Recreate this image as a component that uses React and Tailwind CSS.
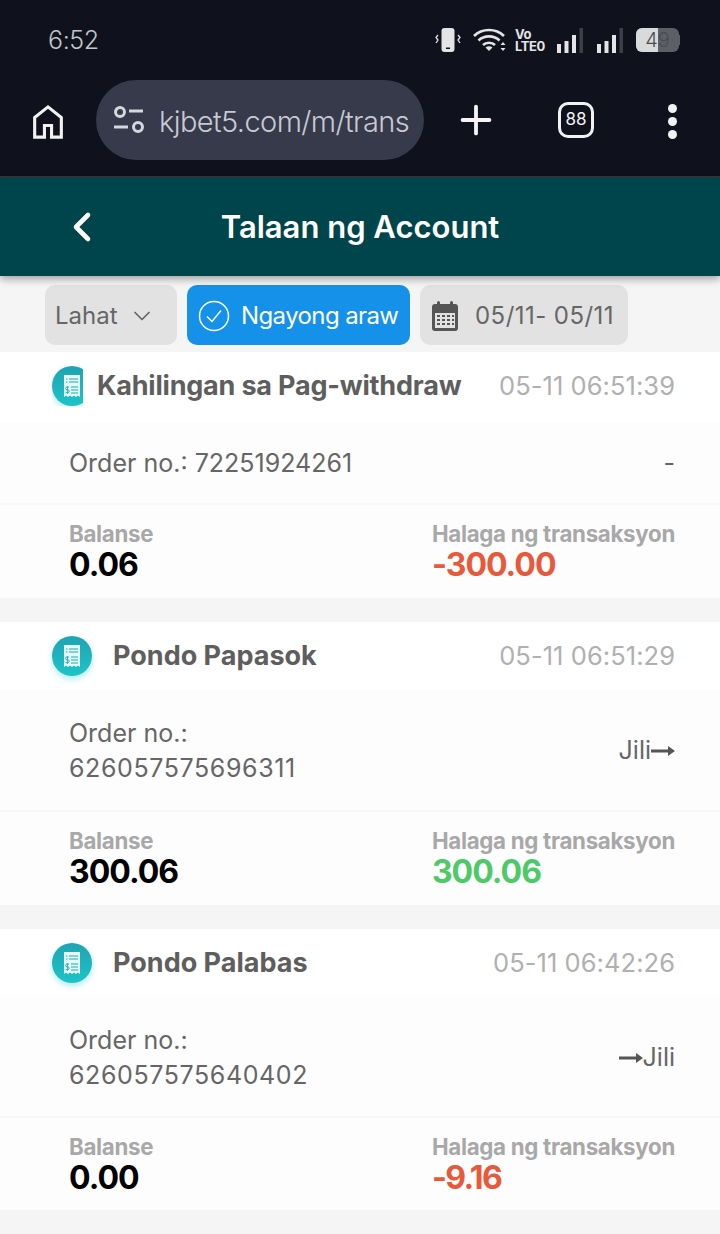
import { ChevronLeft, ChevronDown, Plus } from "lucide-react";

const font = { fontFamily: "Inter, sans-serif" };

const ReceiptIcon = () => (
  <div className="w-10 h-10 shrink-0 rounded-full bg-gradient-to-b from-[#1fa3b2] to-[#1cc4c8] shadow-[0_3px_6px_rgba(30,200,210,0.35)] flex items-center justify-center">
    <svg width="16" height="24" viewBox="0 0 16 24">
      <path d="M0 1h16v22l-2-1.500-2 1.500-2-1.500-2 1.500-2-1.500-2 1.500-2-1.500-2 1.500z" fill="#e6fafa" />
      <path d="M5 5h9M5 8h9M7 13h7M7 16h7M7 19h7" stroke="#1fa8b4" strokeWidth="1.200" />
      <path d="M2 5h1.500M2 8h1.500" stroke="#1fa8b4" strokeWidth="1.200" />
      <path d="M5 13H3a1.200 1.200 0 0 0 0 2.800h.8a1.200 1.200 0 0 1 0 2.800H1.600M3.400 12v8" stroke="#1fa8b4" strokeWidth="0.900" fill="none" />
    </svg>
  </div>
);

const Digits = ({ children }) => <span className="tracking-[0.6px]">{children}</span>;

const Record = ({ title, time, order, orderClass, bottomClass, note, balance, amount, amountClass, clipIcon }) => (
  <div className="bg-[#fdfdfd] mb-6">
    <div className={clipIcon ? "flex items-start justify-between bg-white pl-[52px] pr-[45px] pt-[14px] h-[70px]" : "flex items-center justify-between bg-white pl-[52px] pr-[45px] pt-[14px] pb-[14px] h-[68px]"}>
      <div className="flex items-center">
        {clipIcon ? (
          <div className="w-[31px] mr-[14px] overflow-hidden">
            <ReceiptIcon />
          </div>
        ) : (
          <div className="mr-[21px]">
            <ReceiptIcon />
          </div>
        )}
        <span className={clipIcon ? "text-[27px] font-bold text-[#5e5e5e] tracking-[-0.2px] leading-[40px]" : "text-[27px] font-bold text-[#5e5e5e]"}>{title}</span>
      </div>
      <span className={clipIcon ? "text-[25.5px] text-[#b0b0b0] tracking-[0.05px] leading-[40px]" : "text-[25.5px] text-[#b0b0b0] tracking-[0.05px]"}>{time}</span>
    </div>
    <div className={orderClass}>
      <div className="leading-[35px]">{order}</div>
      <div>{note}</div>
    </div>
    <div className={bottomClass}>
      <div>
        <div className="text-[22.3px] font-bold text-[#a8a8a8] leading-[28px] tracking-[-0.3px]">Balanse</div>
        <div className="text-[32px] font-bold text-black leading-[33px] tracking-[-1px]">{balance}</div>
      </div>
      <div>
        <div className="text-[22.3px] font-bold text-[#a8a8a8] leading-[28px] tracking-[-0.3px]">Halaga ng transaksyon</div>
        <div className={amountClass}>{amount}</div>
      </div>
    </div>
  </div>
);

const Arrow = () => (
  <svg width="24" height="12" viewBox="0 0 24 12" className="inline-block">
    <path d="M0 4.500h17V1l7 5-7 5V7.500H0z" fill="#555555" />
  </svg>
);

const Signal = ({ className }) => (
  <svg width="26" height="25" viewBox="0 0 26 25" className={className}>
    <rect x="0" y="16" width="4" height="9" fill="#e4e4e6" />
    <rect x="7.500" y="13" width="4" height="12" fill="#e4e4e6" />
    <rect x="15" y="7" width="4" height="18" fill="#e4e4e6" />
    <rect x="22.500" y="0" width="3.500" height="25" fill="#3d3f47" />
  </svg>
);

export default function App() {
  return (
    <div className="w-[720px] h-[1234px] overflow-hidden bg-[#f5f5f5]" style={font}>
      {/* phone status bar */}
      <div className="bg-[#0f121c] h-[80px] flex items-center justify-between pl-[48px] pr-[40px]">
        <span className="text-[25px] font-light text-[#c4c6cb] tracking-[-0.4px] pt-[2px]">6:52</span>
        <div className="flex items-center">
          <svg width="26" height="26" viewBox="0 0 26 26" className="mr-[12px]">
            <rect x="6.500" y="1" width="13" height="24" rx="3" fill="#e4e4e6" />
            <rect x="11" y="20.500" width="4" height="1.500" fill="#0f121c" />
            <path d="M3 8l-2 2.500 2 2.500-2 3M23 8l2 2.500-2 2.500 2 3" stroke="#e4e4e6" strokeWidth="1.300" fill="none" />
          </svg>
          <svg width="34" height="26" viewBox="0 0 34 26" className="mr-[8px]">
            <path d="M1 9c8-8 22-8 30 0M5.500 13.500c5.500-5.500 15.500-5.500 21 0M10 18c3-3 9-3 12 0" stroke="#e4e4e6" strokeWidth="2.600" fill="none" />
            <path d="M12.500 20.500c2-1.800 5-1.800 7 0l-3.500 3.500z" fill="#e4e4e6" />
            <path d="M30 15l2.500 3h-5zM30 24l2.500-3h-5z" fill="#e4e4e6" />
          </svg>
          <div className="w-[31px] mr-[11px] text-[#e4e4e6] font-bold text-[13px] leading-[12px] tracking-[-0.4px]">
            <div>Vo</div>
            <div>LTE0</div>
          </div>
          <Signal className="mr-[14px]" />
          <Signal className="mr-[13px]" />
          <div className="relative w-[43px] h-[24px] rounded-[6px] bg-[#5c5f68] overflow-hidden flex items-center justify-center">
            <div className="absolute left-0 top-0 bottom-0 w-[22px] bg-[#d9dadc]" />
            <span className="relative text-[20px] font-light text-[#4a4c52]">49</span>
          </div>
          <div className="w-[1px] h-[10px] bg-[#5c5f68]" />
        </div>
      </div>

      {/* browser bar */}
      <div className="bg-[#0f121c] h-[98px] flex items-start pl-[32px] border-b-2 border-[#2b3a40]">
        <svg width="32" height="36" viewBox="0 0 36 40" className="mt-[24px] mr-[32px]" fill="none" stroke="#f2f2f2" strokeWidth="3.500">
          <path d="M3 37V15L18 3l15 12v22H22V24h-8v13z" />
        </svg>
        <div className="w-[328px] h-[80px] rounded-[40px] bg-[#363a4a] flex items-center pl-[17px] mr-[29px] overflow-hidden">
          <svg width="32" height="32" viewBox="0 0 32 32" className="shrink-0 mr-[14px]" fill="none" stroke="#d5d7dd" strokeWidth="3">
            <circle cx="7" cy="8" r="4.500" />
            <path d="M16 7h14M1 23h14" />
            <circle cx="25" cy="23" r="4.500" />
          </svg>
          <span className="text-[29px] font-light text-[#c8cad2] tracking-[-0.6px] whitespace-nowrap pt-[4px]">kjbet5.com/m/trans</span>
        </div>
        <Plus className="mt-[17px] mr-[59px] text-[#f4f4f4]" size={46} strokeWidth={2} />
        <div className="mt-[22px] mr-[74px] w-[36px] h-[36px] rounded-[10px] border-[3px] border-[#f2f2f2] flex items-center justify-center text-[17px] text-[#f2f2f2]">88</div>
        <div className="mt-[24px] flex flex-col gap-[4px]">
          <div className="w-[9px] h-[9px] rounded-full bg-[#f2f2f2]" />
          <div className="w-[9px] h-[9px] rounded-full bg-[#f2f2f2]" />
          <div className="w-[9px] h-[9px] rounded-full bg-[#f2f2f2]" />
        </div>
      </div>

      {/* page header */}
      <div className="relative h-[98px] bg-[#00454b] flex items-center justify-center shadow-[0_3px_8px_rgba(0,0,0,0.35)]">
        <ChevronLeft className="absolute left-[58px] top-[25px] text-white" size={48} strokeWidth={2.300} />
        <span className="text-[31px] font-semibold text-white">Talaan ng Account</span>
      </div>

      {/* filters */}
      <div className="h-[76px] flex items-start pt-[9px] pl-[45px] gap-[10px]">
        <div className="w-[132px] h-[60px] rounded-[10px] bg-[#e2e2e2] flex items-center pl-[10px] pt-[2px] text-[24px] text-[#666666]">
          Lahat
          <ChevronDown className="ml-[10px] text-[#666666]" size={28} strokeWidth={1.500} />
        </div>
        <div className="w-[223px] h-[60px] rounded-[10px] bg-[#1591ea] flex items-center pl-[11px] pt-[2px] text-[24px] text-white tracking-[-0.6px]">
          <svg width="32" height="32" viewBox="0 0 32 32" className="mr-[11px]" fill="none" stroke="#ffffff" strokeWidth="1.500">
            <circle cx="16" cy="16" r="14.500" />
            <path d="M9 16.500l5 5 9-11" />
          </svg>
          Ngayong araw
        </div>
        <div className="w-[208px] h-[60px] rounded-[10px] bg-[#e2e2e2] flex items-center pl-[11px] pt-[2px] text-[24px] text-[#666666] tracking-[0.45px]">
          <svg width="28" height="32" viewBox="0 0 28 32" className="mr-[16px]">
            <rect x="1" y="4" width="26" height="27" rx="3" fill="#555555" />
            <rect x="6" y="1" width="3" height="6" rx="1.500" fill="#555555" />
            <rect x="19" y="1" width="3" height="6" rx="1.500" fill="#555555" />
            <path d="M4 13h20v15H4z" fill="#e2e2e2" />
            <path d="M6 15h3v2H6zM11 15h3v2h-3zM16 15h3v2h-3zM21 15h2v2h-2zM6 19h3v2H6zM11 19h3v2h-3zM16 19h3v2h-3zM21 19h2v2h-2zM6 23h3v2H6zM11 23h3v2h-3zM16 23h3v2h-3zM21 23h2v2h-2z" fill="#555555" />
          </svg>
          05/11- 05/11
        </div>
      </div>

      <Record
        clipIcon
        title="Kahilingan sa Pag-withdraw"
        time="05-11 06:51:39"
        order="Order no.: 72251924261"
        orderClass="flex items-center justify-between pl-[69px] pr-[45px] pt-[2px] h-[83px] text-[25px] text-[#666666] border-b-2 border-[#f7f7f7]"
        bottomClass="flex justify-between pl-[69px] pr-[45px] pt-[15px] h-[93px]"
        note="-"
        balance="0.06"
        amount="-300.00"
        amountClass="text-[32px] font-bold text-[#e8593c] leading-[33px] tracking-[-1px]"
      />
      <Record
        title="Pondo Papasok"
        time="05-11 06:51:29"
        order={<>Order no.:<br /><Digits>626057575696311</Digits></>}
        orderClass="flex items-center justify-between pl-[69px] pr-[45px] pt-[2px] h-[122px] text-[25px] text-[#666666] border-b-2 border-[#f7f7f7]"
        bottomClass="flex justify-between pl-[69px] pr-[45px] pt-[15px] h-[93px]"
        note={<span className="flex items-center">Jili<Arrow /></span>}
        balance="300.06"
        amount="300.06"
        amountClass="text-[32px] font-bold text-[#4ec968] leading-[33px] tracking-[-1px]"
      />
      <Record
        title="Pondo Palabas"
        time="05-11 06:42:26"
        order={<>Order no.:<br /><Digits>626057575640402</Digits></>}
        orderClass="flex items-center justify-between pl-[69px] pr-[45px] pt-[2px] h-[121px] text-[25px] text-[#666666] border-b-2 border-[#f7f7f7]"
        bottomClass="flex justify-between pl-[69px] pr-[45px] pt-[15px] h-[92px]"
        note={<span className="flex items-center"><Arrow />Jili</span>}
        balance="0.00"
        amount="-9.16"
        amountClass="text-[32px] font-bold text-[#e8593c] leading-[33px] tracking-[-1.6px]"
      />
    </div>
  );
}
